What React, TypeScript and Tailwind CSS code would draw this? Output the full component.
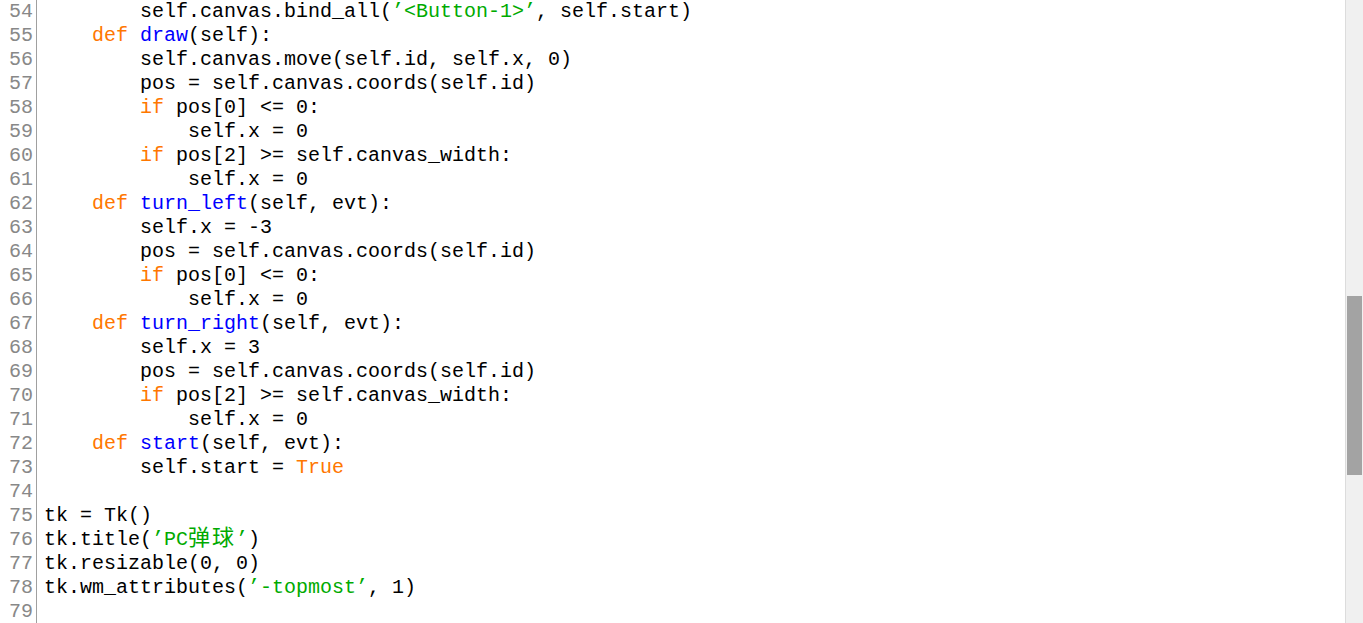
import React from 'react';

type Tok = { t: string; c?: string };

const KW = 'text-[#ff7700]';
const DEF = 'text-[#0000ff]';
const STR = 'text-[#00aa00]';

const source: string[] = [
  "        self.canvas.bind_all(’<Button-1>’, self.start)",
  '    def draw(self):',
  '        self.canvas.move(self.id, self.x, 0)',
  '        pos = self.canvas.coords(self.id)',
  '        if pos[0] <= 0:',
  '            self.x = 0',
  '        if pos[2] >= self.canvas_width:',
  '            self.x = 0',
  '    def turn_left(self, evt):',
  '        self.x = -3',
  '        pos = self.canvas.coords(self.id)',
  '        if pos[0] <= 0:',
  '            self.x = 0',
  '    def turn_right(self, evt):',
  '        self.x = 3',
  '        pos = self.canvas.coords(self.id)',
  '        if pos[2] >= self.canvas_width:',
  '            self.x = 0',
  '    def start(self, evt):',
  '        self.start = True',
  '',
  'tk = Tk()',
  'tk.title(’PC弹球’)',
  'tk.resizable(0, 0)',
  "tk.wm_attributes(’-topmost’, 1)",
  '',
];

// tiny highlighter, just enough for this snippet
function tokenize(line: string): Tok[] {
  const out: Tok[] = [];
  const re = /(’[^’]*’)|\b(def|if|True)\b/g;
  let last = 0;
  let m: RegExpExecArray | null;
  while ((m = re.exec(line))) {
    if (m.index > last) out.push({ t: line.slice(last, m.index) });
    last = re.lastIndex;
    if (m[1]) {
      out.push({ t: m[1], c: STR });
      continue;
    }
    out.push({ t: m[2], c: KW });
    if (m[2] === 'def') {
      const name = /^(\s+)(\w+)/.exec(line.slice(last));
      if (name) {
        out.push({ t: name[1] });
        out.push({ t: name[2], c: DEF });
        last += name[0].length;
        re.lastIndex = last;
      }
    }
  }
  if (last < line.length) out.push({ t: line.slice(last) });
  return out;
}

// CJK glyphs take two cells in the editor font
function Cells({ text }: { text: string }) {
  const parts = text.split(/([\u4e00-\u9fff]+)/);
  return (
    <>
      {parts.map((p, i) =>
        /[\u4e00-\u9fff]/.test(p) ? (
          <span
            key={i}
            className="text-[22px] leading-[0] tracking-[2px] font-['Noto_Sans_CJK_SC',sans-serif]"
          >
            {p}
          </span>
        ) : (
          <React.Fragment key={i}>{p}</React.Fragment>
        )
      )}
    </>
  );
}

export default function App() {
  const first = 54;
  return (
    <div className="flex h-[623px] w-full overflow-hidden bg-white font-['Liberation_Mono',monospace] text-[20px] leading-[24px] text-black">
      {/* Line numbers */}
      <div className="w-[37px] shrink-0 border-r border-[#a0a0a0] pr-[3px] text-right text-[#888888]">
        {source.map((_, i) => (
          <div key={i} className="h-[24px]">
            {first + i}
          </div>
        ))}
      </div>

      {/* Code */}
      <div className="flex-1 whitespace-pre pl-[7px]">
        {source.map((line, i) => (
          <div key={i} className="h-[24px]">
            {tokenize(line).map((tk, j) => (
              <span key={j} className={tk.c}>
                <Cells text={tk.t} />
              </span>
            ))}
          </div>
        ))}
      </div>

      {/* Scrollbar */}
      <div className="flex w-[18px] shrink-0 flex-col border-l border-[#dcdcdc] bg-[#f0f0f0] px-px">
        <div className="h-[296px]" />
        <div className="h-[179px] bg-[#a3a3a3]" />
      </div>
    </div>
  );
}
